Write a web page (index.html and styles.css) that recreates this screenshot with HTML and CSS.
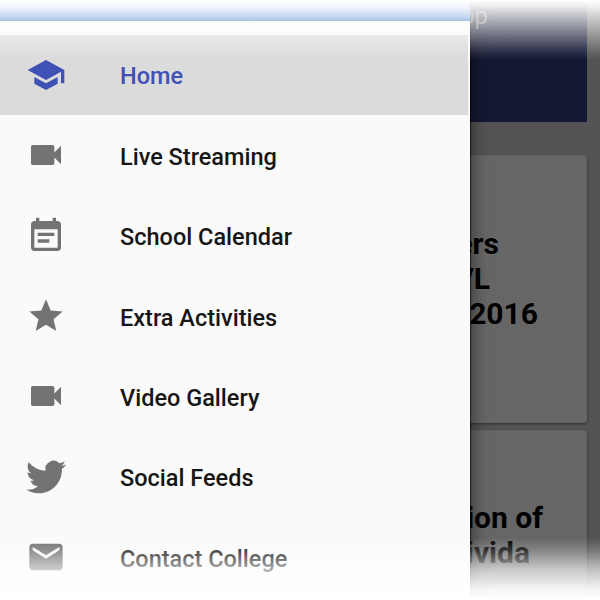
FILE: index.html
```html
<!DOCTYPE html>
<html lang="en">
<head>
<meta charset="utf-8">
<title>College App</title>
<link rel="stylesheet" href="styles.css">
</head>
<body>
<div class="screen">
  <main class="page">
    <header class="bar"><span class="bar-title">App</span></header>
    <article class="card first">
      <p class="line l1">ers</p>
      <p class="line l2">VL</p>
      <p class="line l3">2016</p>
    </article>
    <article class="card second">
      <p class="line l4">ion of</p>
      <p class="line l5">ivida</p>
    </article>
  </main>
  <nav class="drawer">
    <div class="cover"></div>
    <a class="item active"><svg class="icon" viewBox="0 0 24 24"><path d="M5 13.18v4L12 21l7-3.82v-4L12 17l-7-3.82zM12 3L1 9l11 6 9-4.91V17h2V9L12 3z"/></svg><span>Home</span></a>
    <a class="item"><svg class="icon" viewBox="0 0 24 24"><path d="M17 10.5V7c0-.55-.45-1-1-1H4c-.55 0-1 .45-1 1v10c0 .55.45 1 1 1h12c.55 0 1-.45 1-1v-3.500l4 4v-11l-4 4z"/></svg><span>Live Streaming</span></a>
    <a class="item"><svg class="icon" viewBox="0 0 24 24"><path d="M17 10H7v2h10v-2zm2-7h-1V1h-2v2H8V1H6v2H5c-1.110 0-1.990.9-1.990 2L3 19c0 1.100.89 2 2 2h14c1.100 0 2-.9 2-2V5c0-1.100-.9-2-2-2zm0 16H5V8h14v11zm-5-5H7v2h7v-2z"/></svg><span>School Calendar</span></a>
    <a class="item"><svg class="icon" viewBox="0 0 24 24"><path d="M12 17.270L18.180 21l-1.640-7.030L22 9.240l-7.190-.61L12 2 9.190 8.630 2 9.240l5.460 4.730L5.820 21z"/></svg><span>Extra Activities</span></a>
    <a class="item"><svg class="icon" viewBox="0 0 24 24"><path d="M17 10.5V7c0-.55-.45-1-1-1H4c-.55 0-1 .45-1 1v10c0 .55.45 1 1 1h12c.55 0 1-.45 1-1v-3.500l4 4v-11l-4 4z"/></svg><span>Video Gallery</span></a>
    <a class="item"><svg class="icon" viewBox="0 0 24 24"><path d="M23.950 4.570a10 10 0 0 1-2.820.77 4.960 4.960 0 0 0 2.160-2.720c-.95.55-2 .95-3.130 1.180a4.920 4.920 0 0 0-8.380 4.480C7.690 8.090 4.070 6.130 1.640 3.160a4.820 4.820 0 0 0-.67 2.480c0 1.710.87 3.210 2.190 4.100a4.900 4.900 0 0 1-2.230-.62v.06a4.920 4.920 0 0 0 3.950 4.830 5 5 0 0 1-2.210.08 4.940 4.940 0 0 0 4.600 3.420A9.870 9.870 0 0 1 0 19.540a14 14 0 0 0 7.550 2.210c9.050 0 14-7.500 14-13.980 0-.21 0-.42-.02-.63a9.940 9.940 0 0 0 2.460-2.550z"/></svg><span>Social Feeds</span></a>
    <a class="item"><svg class="icon" viewBox="0 0 24 24"><path d="M20 4H4c-1.100 0-1.990.9-1.990 2L2 18c0 1.100.9 2 2 2h16c1.100 0 2-.9 2-2V6c0-1.100-.9-2-2-2zm0 4l-8 5-8-5V6l8 5 8-5v2z"/></svg><span>Contact College</span></a>
  </nav>
  <div class="fade top"></div>
  <div class="fade bottom"></div>
</div>
</body>
</html>
```
FILE: styles.css
```css
* { box-sizing: border-box; }
body { margin: 0; font-family: Roboto, sans-serif; }
.screen {
  position: relative;
  width: 600px;
  height: 600px;
  overflow: hidden;
  background: #545454;
}
.page { padding: 0 13px 0 440px; }
.bar {
  height: 122px;
  margin-bottom: 33px;
  padding-top: 2px;
  background: #141833;
}
.bar-title {
  display: block;
  width: 48px;
  font-size: 24px;
  line-height: 28px;
  text-align: right;
  color: #777770;
}
.card {
  background: #666;
  border-radius: 4px;
  box-shadow: 0 1px 3px rgba(0, 0, 0, .45);
}
.first { height: 268px; margin-bottom: 7px; padding-top: 71px; }
.second { height: 180px; padding-top: 70px; }
.line {
  margin: 0;
  font-size: 30px;
  font-weight: 700;
  line-height: 35px;
  text-align: right;
  color: #000;
}
.l1 { width: 59px; }
.l2 { width: 50px; }
.l3 { width: 98px; }
.l4 { width: 103px; }
.l5 { width: 90px; }
.drawer {
  position: absolute;
  top: 0;
  left: 0;
  width: 469.5px;
  height: 600px;
  background: #fafafa;
  box-shadow: 1px 0 1px rgba(0, 0, 0, .5), 4px 0 15px rgba(0, 0, 0, .4);
}
.cover {
  height: 21px;
  margin-bottom: 13.5px;
  background: linear-gradient(#8db4e8, #0f57c4);
}
.item {
  display: flex;
  align-items: center;
  height: 80.45px;
  padding-left: 26px;
  font-size: 23.5px;
  font-weight: 500;
  line-height: 28px;
  color: #161616;
}
.item span { padding-top: 3px; }
.active {
  width: 468px;
  background: #dbdbdb;
  color: #3f51b5;
}
.icon {
  width: 40px;
  height: 40px;
  margin-right: 54px;
  fill: #737373;
}
.active .icon { fill: #3f51b5; }
.fade { position: absolute; left: 0; width: 100%; }
.top {
  top: 0;
  height: 60px;
  background: linear-gradient(#fff 0, rgba(255, 255, 255, .92) 6px, rgba(255, 255, 255, .66) 20px, rgba(255, 255, 255, .38) 36px, rgba(255, 255, 255, .1) 52px, transparent);
}
.bottom {
  bottom: 0;
  height: 62px;
  background: linear-gradient(transparent, rgba(255, 255, 255, .2) 12px, rgba(255, 255, 255, .65) 32px, rgba(255, 255, 255, .92) 50px, #fff 60px);
}
```
